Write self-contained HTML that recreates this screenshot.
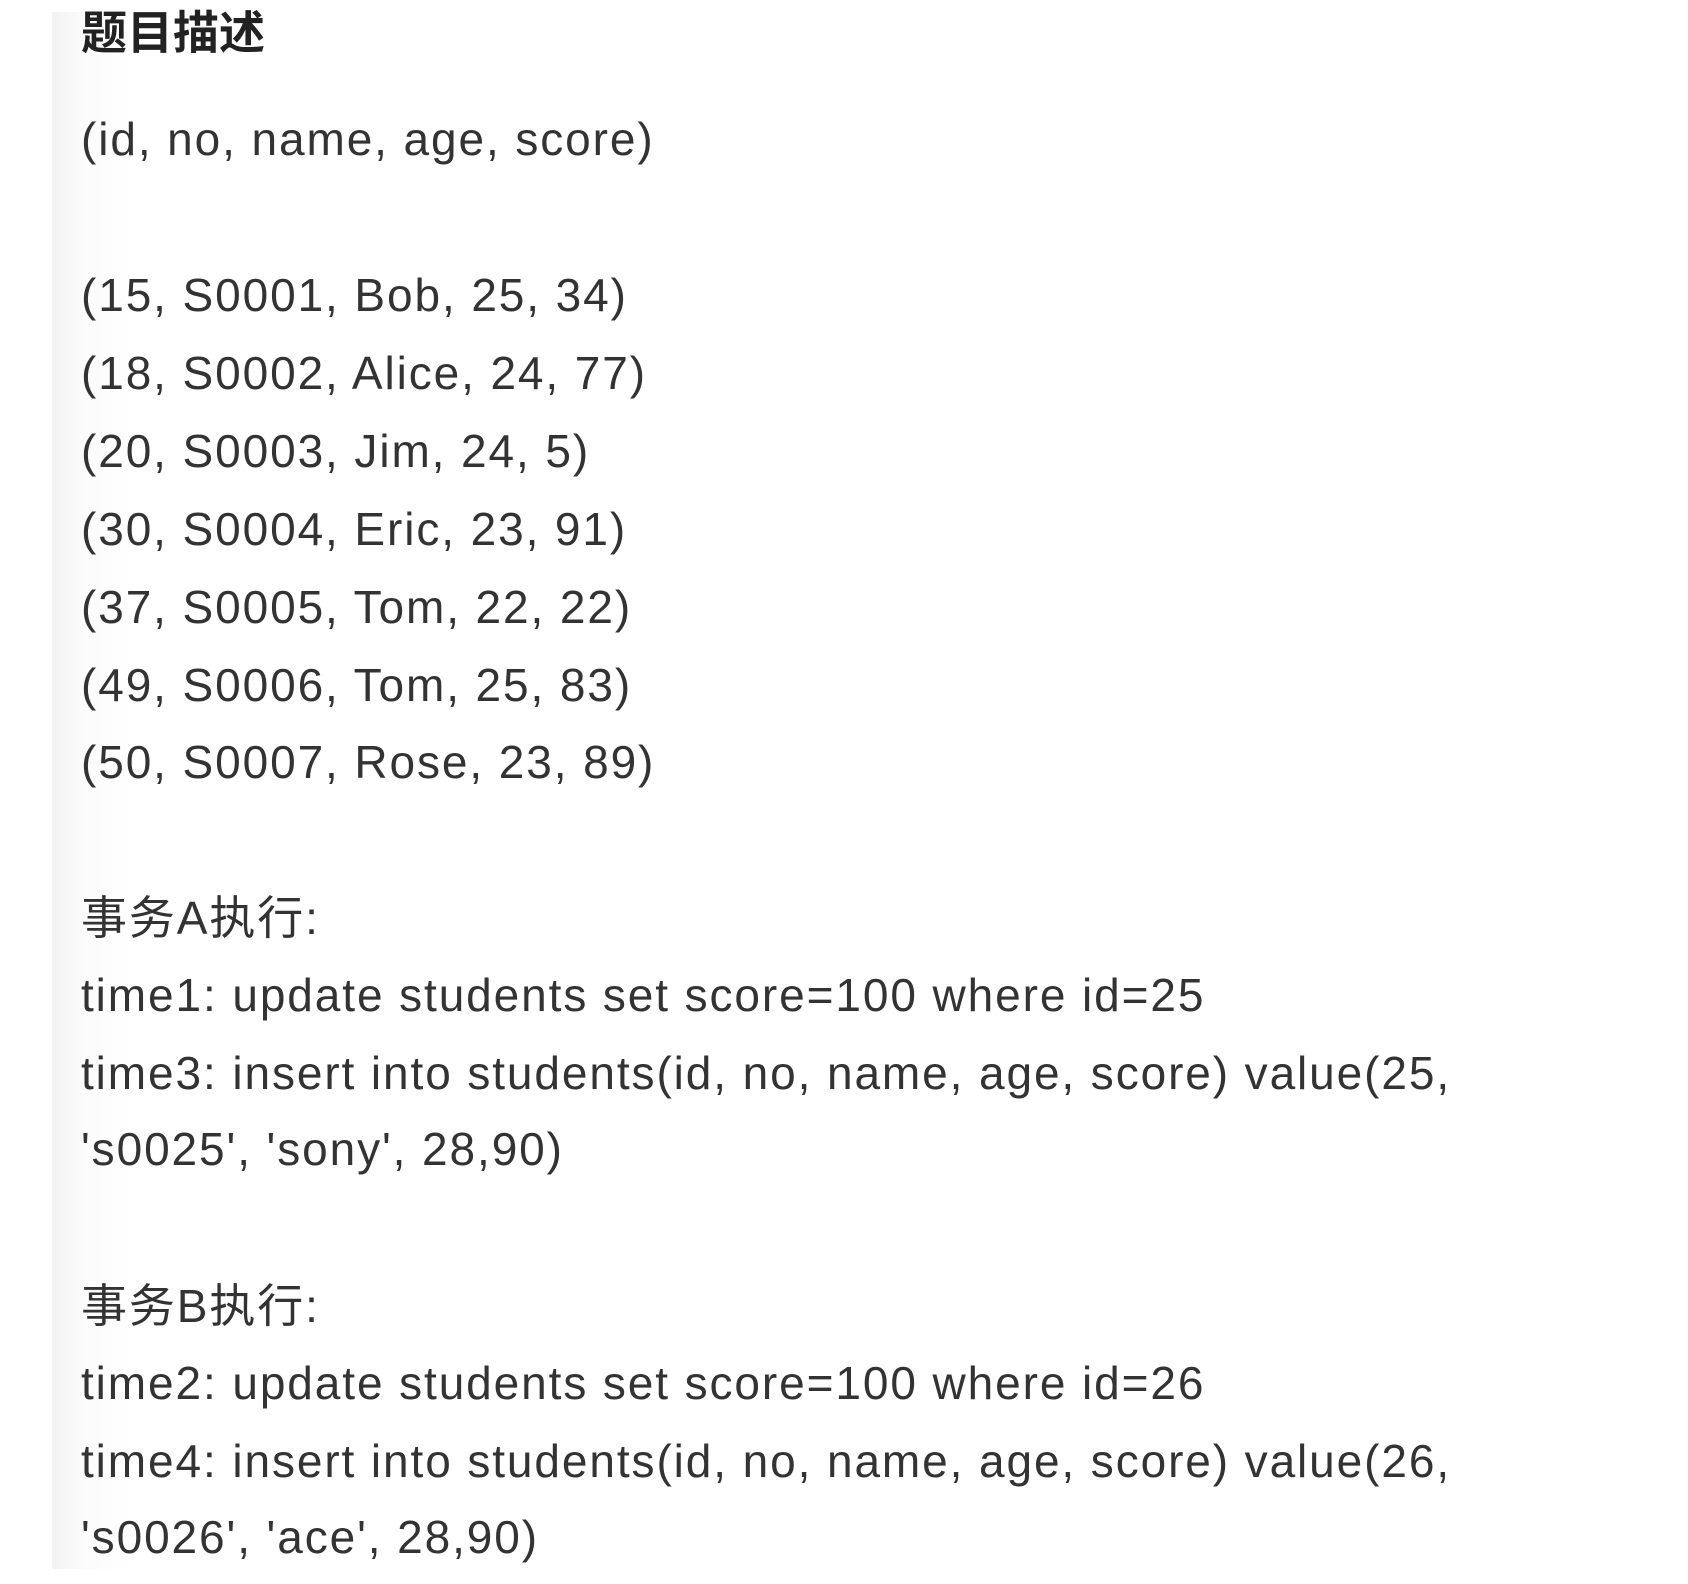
<!DOCTYPE html>
<html><head><meta charset="utf-8"><style>
html,body{margin:0;padding:0;width:1688px;height:1584px;background:#fff;overflow:hidden}
.panel{position:absolute;left:52px;top:12px;width:1636px;height:1557px;background:linear-gradient(90deg,#f3f3f3 0,#fbfbfb 30px,#fff 80px)}
.l{position:absolute;left:81px;height:78px;line-height:78px;font-family:"Liberation Sans","Noto Sans CJK SC",sans-serif;font-size:46px;letter-spacing:1.9px;color:#333;white-space:nowrap}
.t{font-weight:bold;font-size:46px;letter-spacing:0;color:#222}
</style></head><body>
<div class="panel"></div>
<div class="l t" style="top:-6px">题目描述</div>
<div class="l" style="top:100px">(id, no, name, age, score)</div>
<div class="l" style="top:256px">(15, S0001, Bob, 25, 34)</div>
<div class="l" style="top:334px">(18, S0002, Alice, 24, 77)</div>
<div class="l" style="top:412px">(20, S0003, Jim, 24, 5)</div>
<div class="l" style="top:490px">(30, S0004, Eric, 23, 91)</div>
<div class="l" style="top:568px">(37, S0005, Tom, 22, 22)</div>
<div class="l" style="top:646px">(49, S0006, Tom, 25, 83)</div>
<div class="l" style="top:723px">(50, S0007, Rose, 23, 89)</div>
<div class="l" style="top:879px">事务A执行:</div>
<div class="l" style="top:956px">time1: update students set score=100 where id=25</div>
<div class="l" style="top:1034px">time3: insert into students(id, no, name, age, score) value(25,</div>
<div class="l" style="top:1110px">'s0025', 'sony', 28,90)</div>
<div class="l" style="top:1267px">事务B执行:</div>
<div class="l" style="top:1344px">time2: update students set score=100 where id=26</div>
<div class="l" style="top:1422px">time4: insert into students(id, no, name, age, score) value(26,</div>
<div class="l" style="top:1498px">'s0026', 'ace', 28,90)</div>
</body></html>
